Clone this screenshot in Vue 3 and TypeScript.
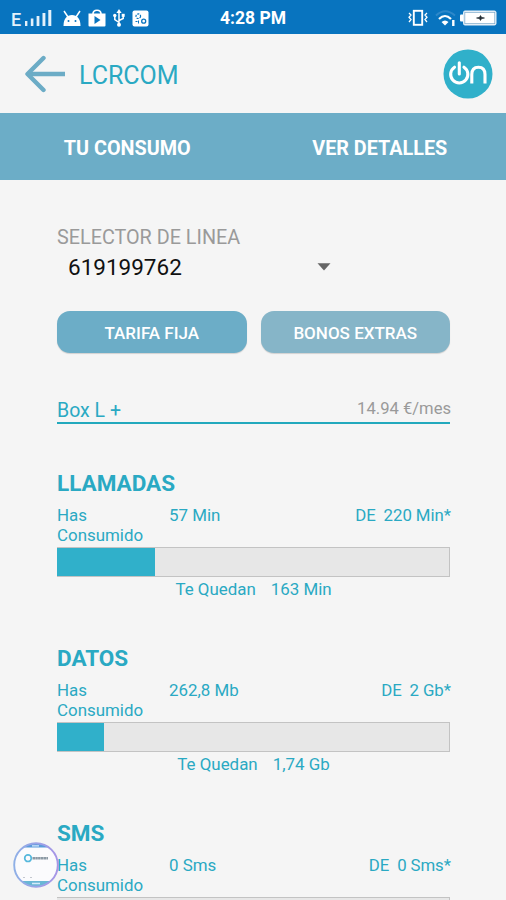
<script setup lang="ts">
interface Usage {
  name: string
  used: string
  total: string
  left?: string
  percent: number
}

const usages: Usage[] = [
  { name: 'LLAMADAS', used: '57 Min', total: '220 Min*', left: '163 Min', percent: 25 },
  { name: 'DATOS', used: '262,8 Mb', total: '2 Gb*', left: '1,74 Gb', percent: 12.1 },
  { name: 'SMS', used: '0 Sms', total: '0 Sms*', percent: 0 },
]
</script>

<template>
  <div class="screen">
    <div class="status">
      <div class="status-left">
        <span class="net">E</span>
        <svg class="signal" width="27" height="17" viewBox="0 0 27 17" fill="#e3f1fb">
          <rect x="0" y="11" width="2.4" height="5" />
          <rect x="5.8" y="8.5" width="2.6" height="7.5" />
          <rect x="11.6" y="6" width="2.8" height="10" />
          <rect x="17.5" y="3" width="2.9" height="13" />
          <rect x="23.3" y="0" width="3" height="16" />
        </svg>
        <svg class="android" width="18" height="17" viewBox="0 0 18 17">
          <path d="M1 1l4 6M17 1l-4 6" stroke="#fff" stroke-width="1.5" />
          <path d="M.5 16C.5 8.5 4 5 9 5s8.500 3.500 8.500 11z" fill="#fff" />
          <circle cx="5.5" cy="11" r="1" fill="#0874bf" />
          <circle cx="12.5" cy="11" r="1" fill="#0874bf" />
        </svg>
        <svg class="store" width="18" height="18" viewBox="0 0 18 18">
          <path d="M5 5C5 0 13 0 13 5" fill="none" stroke="#fff" stroke-width="1.6" />
          <path d="M.5 4.500h17V16.500q0 1-1 1h-15q-1 0-1-1z" fill="#fff" />
          <path d="M6.500 7l6 4-6 4z" fill="#0874bf" />
        </svg>
        <svg class="usb" width="12" height="18" viewBox="0 0 12 18">
          <path d="M6 2v14M6 13.500L1.800 10.500V6M6 11.500l4.200-2V5.500" fill="none" stroke="#fff" stroke-width="1.5" />
          <path d="M6 0l2.600 4H3.400z" fill="#fff" />
          <circle cx="6" cy="15.8" r="2" fill="#fff" />
          <circle cx="1.8" cy="6.5" r="1.7" fill="#fff" />
          <rect x="8.7" y="4.8" width="3" height="3" fill="#fff" />
        </svg>
        <svg class="app" width="17" height="17" viewBox="0 0 17 17">
          <rect x=".5" y=".5" width="16" height="16" rx="2" fill="#fff" />
          <circle cx="6.3" cy="6.2" r="2.3" fill="none" stroke="#0874bf" stroke-width="1.2" stroke-dasharray="2 .9" />
          <circle cx="11.7" cy="11.2" r="2" fill="none" stroke="#0874bf" stroke-width="1.3" />
          <path d="M6.500 10.500v3M3.500 11.500h2" stroke="#0874bf" />
        </svg>
      </div>
      <span class="clock">4:28 PM</span>
      <div class="status-right">
        <svg width="20" height="18" viewBox="0 0 20 18" fill="none" stroke="#fff">
          <rect x="5.8" y="1.8" width="8.4" height="14" stroke-width="1.9" />
          <path d="M1 4l2 2-2 2.300 2 2.300-2 2.400M19 4l-2 2 2 2.300-2 2.300 2 2.400" stroke-width="1.3" />
        </svg>
        <svg class="wifi" width="21" height="18" viewBox="0 0 21 18" fill="none">
          <path d="M1 6.500Q10-2 20 6.500" stroke="#2d88ca" stroke-width="2" />
          <path d="M4 10q6-6 12 0" stroke="#fff" stroke-width="2.2" />
          <path d="M6.500 13q3.500-3 7 0l-3.500 3.500z" fill="#fff" />
          <path d="M18.300 11v6" stroke="#fff" stroke-width="2.4" />
        </svg>
        <svg class="battery" width="37" height="16" viewBox="0 0 37 16">
          <rect x="0" y="4.5" width="4" height="7" rx="1" fill="#fff" />
          <rect x="3.5" y="1" width="32.5" height="14" rx="1.5" fill="#fff" stroke="#e6f0f8" />
          <rect x="4.8" y="2.3" width="30" height="11.4" fill="none" stroke="#7aa8cb" stroke-width=".8" />
          <path d="M16.500 8l3-.7L20.500 5.500l1 1.800 3 .7-3 .7-1 1.800-1-1.800z" fill="#222b33" stroke="#222b33" stroke-width=".6" />
        </svg>
      </div>
    </div>

    <header class="header">
      <svg class="back" width="43" height="38" viewBox="0 0 43 38" fill="none" stroke="#6cacc6">
        <path d="M42 19H5" stroke-width="4.6" />
        <path d="M20.500 3L4.500 19l16 16" stroke-width="4.4" stroke-linecap="round" stroke-linejoin="round" />
      </svg>
      <h1 class="title">LCRCOM</h1>
      <svg class="logo" width="50" height="50" viewBox="0 0 50 50">
        <circle cx="25" cy="25" r="24.5" fill="#30b0ca" />
        <g fill="none" stroke="#fff" stroke-width="3.1" stroke-linecap="round">
          <path d="M11.500 18.200A8.600 8.600 0 1 0 21 18.200" />
          <path d="M16.300 13.800V25" />
          <path d="M28.800 34.500V25.500q0-7.300 6.600-7.300t6.600 7.300v9" stroke-linecap="butt" />
        </g>
      </svg>
    </header>

    <nav class="tabs">
      <span>TU CONSUMO</span>
      <span>VER DETALLES</span>
    </nav>

    <main class="content">
      <div class="label">SELECTOR DE LINEA</div>
      <div class="select">
        <span class="number">619199762</span>
        <svg width="14" height="8" viewBox="0 0 14 8"><path d="M.5.200h13L7 7.500z" fill="#666" /></svg>
      </div>
      <div class="buttons">
        <button class="btn">TARIFA FIJA</button>
        <button class="btn btn-dim">BONOS EXTRAS</button>
      </div>
      <div class="plan">
        <span class="plan-name">Box L +</span>
        <span class="price">14.94 €/mes</span>
      </div>

      <section v-for="u in usages" :key="u.name" class="usage">
        <h2 class="usage-name">{{ u.name }}</h2>
        <div class="figures">
          <span class="has">Has Consumido</span>
          <span>{{ u.used }}</span>
          <span class="total">DE&nbsp; {{ u.total }}</span>
        </div>
        <div class="bar"><div class="fill" :style="{ width: u.percent + '%' }"></div></div>
        <div v-if="u.left" class="left"><span>Te Quedan</span><span>{{ u.left }}</span></div>
      </section>
    </main>

    <svg class="bubble" width="48" height="48" viewBox="0 0 48 48">
      <defs>
        <linearGradient id="ring" x1="0" y1="0" x2="1" y2="0">
          <stop offset="0" stop-color="#8fb0e6" />
          <stop offset="1" stop-color="#a795e6" />
        </linearGradient>
        <clipPath id="disc"><circle cx="24" cy="24" r="21.5" /></clipPath>
      </defs>
      <circle cx="24" cy="24" r="21.5" fill="#fbfbfd" />
      <g clip-path="url(#disc)">
        <rect width="48" height="6.5" fill="#5b9bdc" />
        <rect y="40" width="48" height="8" fill="#69b7d5" />
        <path d="M20 4.800h7M20 42.500h8" stroke="#d5eafa" stroke-width="1.3" />
      </g>
      <circle cx="16" cy="17.2" r="3.3" fill="none" stroke="#56b8dc" stroke-width="1.7" />
      <path d="M20.500 17.200h15.500" stroke="#8c9aa5" stroke-width="2.6" stroke-dasharray="2.500 .3" />
      <path d="M11 36.500h2M18 36.500h2" stroke="#c4c8d0" />
      <circle cx="24" cy="24" r="21.8" fill="none" stroke="url(#ring)" stroke-width="1.9" />
    </svg>
  </div>
</template>

<style>
body {
  background: #f5f5f5;
  overflow: hidden;
}
</style>

<style scoped>
.screen {
  position: relative;
  width: 506px;
  height: 900px;
  overflow: hidden;
  background: #f5f5f5;
  font-family: Roboto, "Liberation Sans", sans-serif;
  color: #2aa9c3;
}
.status {
  display: grid;
  grid-template-columns: 1fr auto 1fr;
  align-items: center;
  height: 34px;
  box-sizing: border-box;
  padding: 2px 10px 0 11px;
  background: #0874bf;
  color: #fff;
}
.status-left,
.status-right {
  display: flex;
  align-items: center;
}
.status-right {
  justify-content: flex-end;
}
.net {
  width: 14px;
  padding-top: 2px;
  font-size: 18px;
  font-weight: 500;
  color: #e3f1fb;
}
.signal { margin-right: 11px; }
.android { margin-right: 7px; }
.store { margin-right: 7px; }
.usb { margin-right: 7px; }
.wifi { margin: 0 4px 0 7px; }
.battery { margin-right: -1px; }
.clock {
  margin-right: 1px;
  font-size: 17.5px;
  font-weight: 700;
}
.header {
  display: flex;
  align-items: center;
  height: 79px;
  box-sizing: border-box;
  padding: 0 13px 0 23px;
}
.title {
  flex: 1;
  margin: 3px 0 0 13px;
  font-size: 25px;
  font-weight: 400;
}
.tabs {
  display: grid;
  grid-template-columns: 1fr 1fr;
  align-items: center;
  height: 67px;
  padding: 3px 0 0 1px;
  box-sizing: border-box;
  background: #6cadc7;
  color: #fff;
  font-size: 19.8px;
  font-weight: 700;
  text-align: center;
}
.content {
  padding: 46px 56px 0 57px;
}
.label {
  height: 24px;
  line-height: 24px;
  font-size: 19.8px;
  color: #9a9a9a;
}
.select {
  display: flex;
  align-items: center;
  justify-content: space-between;
  width: 263px;
  height: 34px;
  padding-left: 11px;
}
.number {
  font-size: 22.5px;
  color: #111;
}
.buttons {
  display: grid;
  grid-template-columns: 1fr 1fr;
  gap: 14px;
  margin-top: 27px;
}
.btn {
  height: 42px;
  padding: 1px 0 0;
  border: 0;
  border-radius: 13px;
  background: #6cadc7;
  box-shadow: 0 1px 1px rgba(0, 0, 0, 0.15);
  color: #fff;
  font-family: inherit;
  font-size: 17px;
  font-weight: 500;
}
.btn-dim {
  background: #86b5c8;
}
.plan {
  display: flex;
  justify-content: space-between;
  align-items: center;
  height: 29px;
  margin-top: 40px;
  border-bottom: 2px solid #22a9bd;
}
.plan-name {
  padding-top: 6px;
  font-size: 19.5px;
}
.price {
  margin-right: -1px;
  padding-top: 2px;
  font-size: 16.6px;
  color: #9a9a9a;
}
.usage {
  height: 175px;
}
.plan + .usage {
  margin-top: 46px;
}
.usage-name {
  margin: 0;
  height: 27px;
  line-height: 27px;
  font-size: 22.5px;
  font-weight: 700;
}
.figures {
  display: grid;
  grid-template-columns: 112px 1fr auto;
  height: 39px;
  margin-top: 9px;
  font-size: 16.9px;
  line-height: 19.5px;
}
.has {
  width: 90px;
}
.total {
  margin-right: -1px;
  font-size: 16.8px;
  word-spacing: -0.3px;
}
.bar {
  height: 30px;
  margin-top: 2px;
  box-sizing: border-box;
  border: 1px solid #c3c3c3;
  border-left: 0;
  background: #e7e7e7;
}
.fill {
  height: 100%;
  background: #30b0ca;
}
.left {
  display: flex;
  justify-content: center;
  gap: 15px;
  margin-top: 2px;
  font-size: 16.9px;
  line-height: 20px;
}
.bubble {
  position: absolute;
  left: 12px;
  top: 841px;
}
</style>
